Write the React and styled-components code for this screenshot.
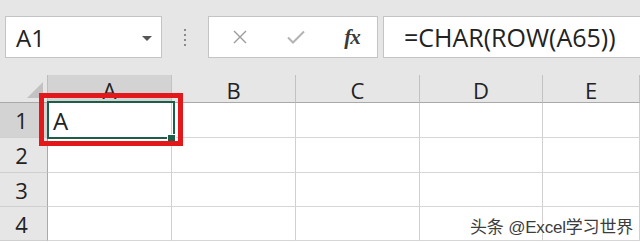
import React from "react";
import styled, { createGlobalStyle } from "styled-components";

const Global = createGlobalStyle`
  html, body {
    margin: 0;
    padding: 0;
    background: #e6e6e6;
    overflow: hidden;
  }
  body {
    font-family: "Open Sans", "Noto Sans", sans-serif;
    color: #222;
  }
`;

const Page = styled.div`
  width: 640px;
  height: 243px;
  position: relative;
  overflow: hidden;
  background: #fff;
`;

const Toolbar = styled.div`
  height: 75px;
  box-sizing: border-box;
  padding-top: 16px;
  display: flex;
  align-items: flex-start;
  background: #e6e6e6;
`;

const Box = styled.div`
  height: 42px;
  box-sizing: border-box;
  background: #fff;
  border: 1px solid #c4c4c4;
  display: flex;
  align-items: center;
`;

const NameBox = styled(Box)`
  margin-left: 5px;
  width: 157px;
  padding: 0 9px 0 10px;
  justify-content: space-between;
  font-size: 24px;
`;

const Caret = styled.span`
  width: 0;
  height: 0;
  border-left: 5px solid transparent;
  border-right: 5px solid transparent;
  border-top: 5px solid #555;
  margin-top: 2px;
`;

const Grip = styled.div`
  width: 46px;
  height: 42px;
  display: flex;
  flex-direction: column;
  align-items: center;
  justify-content: center;
  gap: 3px;
  span {
    width: 2px;
    height: 2px;
    background: #8a8a8a;
  }
`;

const ButtonBox = styled(Box)`
  width: 170px;
  padding: 0 15px 0 21px;
  justify-content: space-between;
`;

const IconButton = styled.span`
  width: 20px;
  display: flex;
  justify-content: center;
  align-items: center;
  color: ${(p) => p.$color};
`;

const Fx = styled.span`
  font-family: "Liberation Serif", "DejaVu Serif", serif;
  font-style: italic;
  font-weight: bold;
  font-size: 21px;
  color: #3a3a3a;
  letter-spacing: -1px;
`;

const FormulaBox = styled(Box)`
  margin-left: 5px;
  flex: 1;
  border-right: none;
  padding-left: 20px;
  font-size: 25px;
  white-space: nowrap;
`;

const Sheet = styled.div`
  position: relative;
  display: grid;
  grid-template-columns: 48px 124px 124px 124px 123px 1fr;
  grid-template-rows: 28px 35px 35px 34px 34px;
`;

const Corner = styled.div`
  position: relative;
  background: #e6e6e6;
  border-right: 1px solid #bdbdbd;
  border-bottom: 1px solid #a9a9a9;
  svg {
    position: absolute;
    right: 4px;
    bottom: 4px;
  }
`;

const ColHead = styled.div`
  background: ${(p) => (p.$active ? "#d3d3d3" : "#e6e6e6")};
  border-right: 1px solid #c2c2c2;
  border-bottom: 1px solid #a9a9a9;
  display: flex;
  align-items: center;
  justify-content: center;
  font-size: 22px;
  padding-top: 2px;
`;

const RowHead = styled.div`
  background: ${(p) => (p.$active ? "#d3d3d3" : "#e6e6e6")};
  border-right: 1px solid #a9a9a9;
  border-bottom: 1px solid #cfcfcf;
  display: flex;
  align-items: center;
  justify-content: center;
  padding-right: 4px;
  font-size: 22px;
`;

const Cell = styled.div`
  background: #fff;
  border-right: 1px solid #d0d0d0;
  border-bottom: 1px solid #d6d6d6;
  display: flex;
  align-items: center;
  padding-left: 5px;
  font-size: 24px;
`;

const Selection = styled.div`
  position: absolute;
  left: 47px;
  top: 26px;
  width: 128px;
  height: 38px;
  box-sizing: border-box;
  border: 2px solid #1c5e48;
  &::after {
    content: "";
    position: absolute;
    right: -3px;
    bottom: -6px;
    width: 7px;
    height: 7px;
    background: #1c5e48;
    border: 1px solid #fff;
  }
`;

const Highlight = styled.div`
  position: absolute;
  left: 39px;
  top: 18px;
  width: 144px;
  height: 53px;
  box-sizing: border-box;
  border: 5px solid #e2181a;
`;

const Watermark = styled.div`
  position: absolute;
  right: 7px;
  bottom: 5px;
  font-family: "Liberation Sans", "Noto Sans CJK SC", sans-serif;
  font-size: 17px;
  color: #3c3c3c;
  text-shadow: 0 0 2px #fff, 0 0 2px #fff;
  letter-spacing: -0.2px;
`;

const columns = ["A", "B", "C", "D", "E"];
const rows = [1, 2, 3, 4];

export default function App() {
  return (
    <Page>
      <Global />
      <Toolbar>
        <NameBox>
          <span>A1</span>
          <Caret />
        </NameBox>
        <Grip>
          <span />
          <span />
          <span />
          <span />
        </Grip>
        <ButtonBox>
          <IconButton $color="#9b9b9b">
            <svg width="16" height="16" viewBox="0 0 16 16">
              <path d="M2 2L14 14M14 2L2 14" stroke="currentColor" strokeWidth="1.4" fill="none" />
            </svg>
          </IconButton>
          <IconButton $color="#b3b3b3">
            <svg width="20" height="16" viewBox="0 0 20 16">
              <path d="M2 8.5L7 13.5L18 2.5" stroke="currentColor" strokeWidth="2" fill="none" />
            </svg>
          </IconButton>
          <IconButton>
            <Fx>fx</Fx>
          </IconButton>
        </ButtonBox>
        <FormulaBox>=CHAR(ROW(A65))</FormulaBox>
      </Toolbar>
      <Sheet>
        <Corner>
          <svg width="16" height="16" viewBox="0 0 16 16">
            <path d="M16 0L16 16L0 16Z" fill="#c2c2c2" />
          </svg>
        </Corner>
        {columns.map((c) => (
          <ColHead key={c} $active={c === "A"}>
            {c}
          </ColHead>
        ))}
        {rows.map((r) => (
          <React.Fragment key={r}>
            <RowHead $active={r === 1}>{r}</RowHead>
            {columns.map((c) => (
              <Cell key={c}>{r === 1 && c === "A" ? "A" : ""}</Cell>
            ))}
          </React.Fragment>
        ))}
        <Selection />
        <Highlight />
      </Sheet>
      <Watermark>头条 @Excel学习世界</Watermark>
    </Page>
  );
}
